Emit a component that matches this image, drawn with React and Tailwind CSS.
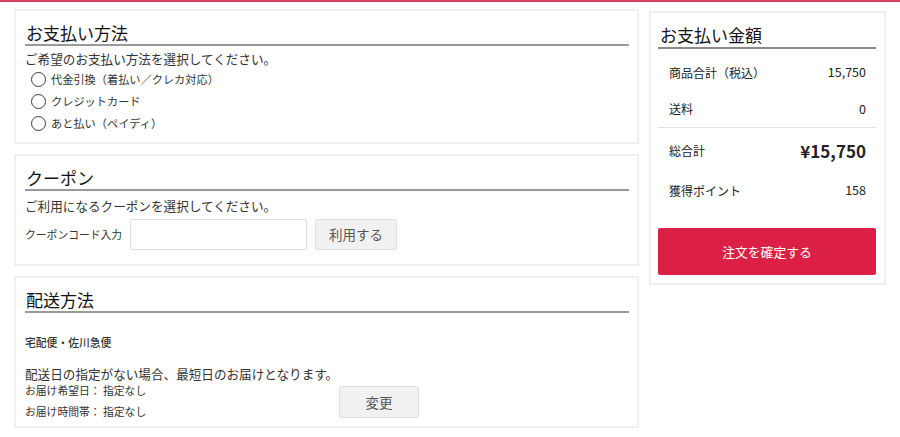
import React from 'react';

const font = { fontFamily: '"Noto Sans CJK JP", "Noto Sans", sans-serif' };

function Heading({ children }) {
    return (
        <div className="text-[17px] leading-[20px] pb-[1px] border-b-2 border-[#9a9a9a] text-[#111] pl-[1px]">
            {children}
        </div>
    );
}

function Panel({ children, className = '' }) {
    return (
        <div className={`border-2 border-[#efefef] bg-white pt-[12px] pl-[9px] pr-[8px] ${className}`}>
            {children}
        </div>
    );
}

function Radio({ label }) {
    return (
        <label className="flex items-center h-[22px] pl-[6px] gap-[5px] text-[11.2px] text-[#333]">
            <span className="w-[15px] h-[15px] rounded-full border-[1.5px] border-[#3a3a3a] bg-white" />
            <span>{label}</span>
        </label>
    );
}

function Row({ label, value, className = '', big = false }) {
    return (
        <div className={`flex items-center justify-between pl-[11px] pr-[10px] text-[12px] text-[#222] ${className}`}>
            <span>{label}</span>
            <span className={big ? 'text-[17px] font-bold' : 'text-[12.5px]'}>{value}</span>
        </div>
    );
}

export default function App() {
    const payments = ['代金引換（着払い／クレカ対応）', 'クレジットカード', 'あと払い（ペイディ）'];

    return (
        <div className="w-[900px] h-[437px] bg-white overflow-hidden text-[#333]" style={font}>
            <div className="h-[2px] bg-[#d6405f]" />

            <div className="flex gap-[10px] pl-[14px] pr-[14px] mt-[7px]">
                {/* Left column */}
                <div className="w-[625px] flex flex-col gap-[10px]">
                    {/* Payment method */}
                    <Panel className="h-[135px]">
                        <Heading>お支払い方法</Heading>
                        <p className="mt-[5px] text-[12.6px] leading-[16px]">ご希望のお支払い方法を選択してください。</p>
                        <div className="mt-[1px]">
                            {payments.map(p => <Radio key={p} label={p} />)}
                        </div>
                    </Panel>

                    {/* Coupon */}
                    <Panel className="h-[112px]">
                        <Heading>クーポン</Heading>
                        <p className="mt-[7px] text-[12.6px] leading-[16px]">ご利用になるクーポンを選択してください。</p>
                        <div className="flex items-center mt-[5px]">
                            <span className="text-[10.8px] w-[105px]">クーポンコード入力</span>
                            <input className="w-[177px] h-[31px] border border-[#dedede] rounded-[2px] bg-white" />
                            <button className="ml-[8px] w-[82px] h-[31px] bg-[#f1f1f1] border border-[#dcdcdc] rounded-[3px] text-[13.5px] text-[#555]">
                                利用する
                            </button>
                        </div>
                    </Panel>

                    {/* Shipping */}
                    <Panel className="h-[152px]">
                        <Heading>配送方法</Heading>
                        <p className="mt-[21px] text-[10.8px] leading-[16px] font-medium">宅配便・佐川急便</p>
                        <p className="mt-[16px] text-[12.6px] leading-[16px]">配送日の指定がない場合、最短日のお届けとなります。</p>
                        <div className="flex items-start">
                            <div className="w-[314px] text-[10.8px]">
                                <p className="leading-[16px]">お届け希望日： 指定なし</p>
                                <p className="mt-[5px] leading-[16px]">お届け時間帯： 指定なし</p>
                            </div>
                            <button className="mt-[4px] w-[80px] h-[32px] bg-[#f1f1f1] border border-[#dcdcdc] rounded-[3px] text-[13.5px] text-[#555]">
                                変更
                            </button>
                        </div>
                    </Panel>
                </div>

                {/* Right column */}
                <div className="w-[237px] mt-[2px]">
                    <div className="h-[274px] border-2 border-[#efefef] bg-white pt-[12px] pl-[7px] pr-[8px]">
                        <div className="text-[17px] leading-[20px] pb-[2px] border-b-2 border-[#8a8a8a] text-[#111] pl-[2px]">
                            お支払い金額
                        </div>
                        <div className="mt-[5px]">
                            <Row label="商品合計（税込）" value="15,750" className="h-[37px]" />
                            <Row label="送料" value="0" className="h-[37px] border-b border-[#e2e2e2]" />
                            <Row label="総合計" value="¥15,750" big className="h-[45px]" />
                            <Row label="獲得ポイント" value="158" className="h-[35px]" />
                        </div>
                        <button className="mt-[20px] w-full h-[47px] bg-[#dc1f45] rounded-[2px] text-white text-[12.8px]">
                            注文を確定する
                        </button>
                    </div>
                </div>
            </div>
        </div>
    );
}
